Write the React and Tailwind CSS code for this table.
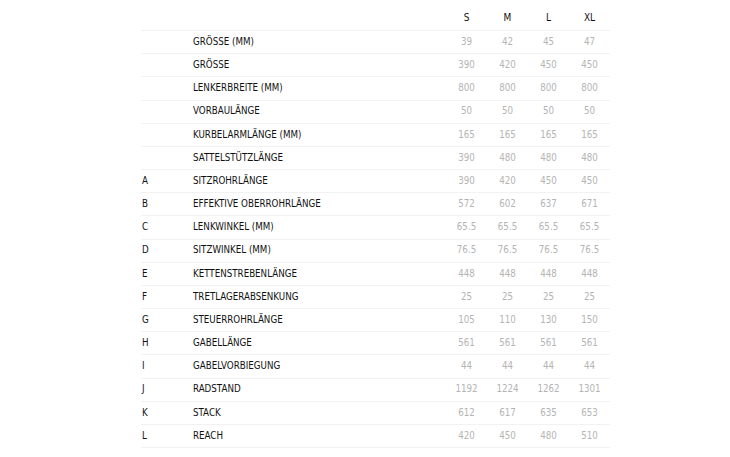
const ROWS = [
  ['', 'GRÖSSE (MM)', ['39', '42', '45', '47']],
  ['', 'GRÖSSE', ['390', '420', '450', '450']],
  ['', 'LENKERBREITE (MM)', ['800', '800', '800', '800']],
  ['', 'VORBAULÄNGE', ['50', '50', '50', '50']],
  ['', 'KURBELARMLÄNGE (MM)', ['165', '165', '165', '165']],
  ['', 'SATTELSTÜTZLÄNGE', ['390', '480', '480', '480']],
  ['A', 'SITZROHRLÄNGE', ['390', '420', '450', '450']],
  ['B', 'EFFEKTIVE OBERROHRLÄNGE', ['572', '602', '637', '671']],
  ['C', 'LENKWINKEL (MM)', ['65.5', '65.5', '65.5', '65.5']],
  ['D', 'SITZWINKEL (MM)', ['76.5', '76.5', '76.5', '76.5']],
  ['E', 'KETTENSTREBENLÄNGE', ['448', '448', '448', '448']],
  ['F', 'TRETLAGERABSENKUNG', ['25', '25', '25', '25']],
  ['G', 'STEUERROHRLÄNGE', ['105', '110', '130', '150']],
  ['H', 'GABELLÄNGE', ['561', '561', '561', '561']],
  ['I', 'GABELVORBIEGUNG', ['44', '44', '44', '44']],
  ['J', 'RADSTAND', ['1192', '1224', '1262', '1301']],
  ['K', 'STACK', ['612', '617', '635', '653']],
  ['L', 'REACH', ['420', '450', '480', '510']],
]

const SIZES = ['S', 'M', 'L', 'XL']

export default function App() {
  return (
    <div className="w-[730px] h-[457px] bg-white overflow-hidden" style={{ fontFamily: '"DejaVu Sans Condensed", "DejaVu Sans", sans-serif' }}>
      <div className="ml-[141px] w-[469px]">
        {/* header */}
        <div className="flex h-[30px] items-center pt-1 text-[10px] text-[#111]">
          <div className="w-[305px]" />
          {SIZES.map(s => (
            <div key={s} className="w-[41px] text-center">{s}</div>
          ))}
        </div>

        {ROWS.map(([letter, label, vals]) => (
          <div key={label} className="flex h-[23.18px] items-center border-t border-[#f2f2f2] text-[9.7px]">
            <div className="w-[52px] pl-px text-[#111]">{letter}</div>
            <div className="w-[253px] text-[#111]">{label}</div>
            {vals.map((v, i) => (
              <div key={i} className="w-[41px] text-center text-[#b4b4b4]">{v}</div>
            ))}
          </div>
        ))}
        <div className="border-t border-[#f2f2f2]" />
      </div>
    </div>
  )
}
